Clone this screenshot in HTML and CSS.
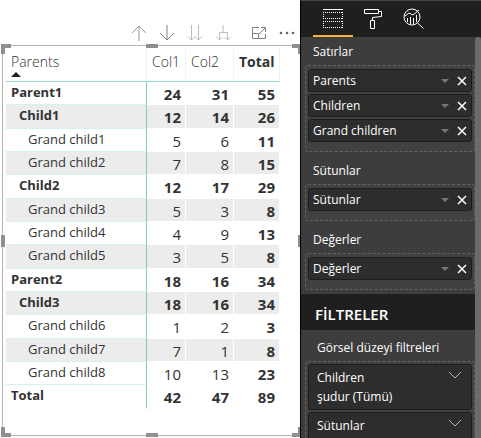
FILE: index.html
```html
<!DOCTYPE html>
<html lang="tr">
<head>
<meta charset="utf-8">
<meta name="viewport" content="width=device-width, initial-scale=1">
<title>Matrix</title>
<link rel="stylesheet" href="styles.css">
</head>
<body>
<main class="canvas">
  <div class="toolbar">
    <button class="tool" aria-label="Drill up"><svg viewBox="0 0 28 20"><path d="M14 18V3M7 10l7-7 7 7"/></svg></button>
    <button class="tool tool-dark" aria-label="Drill down"><svg viewBox="0 0 28 20"><path d="M14 2v15M7 10l7 7 7-7"/></svg></button>
    <button class="tool tool-faint" aria-label="Next level"><svg viewBox="0 0 28 20"><path d="M10.500 2v15M7 13.500l3.500 3.500 3.500-3.500M17.500 2v15M14 13.500l3.500 3.500 3.500-3.500"/></svg></button>
    <button class="tool tool-faint" aria-label="Expand level"><svg viewBox="0 0 28 20"><path d="M14 2v7M10.500 17V9.500h8V17M7.500 14l3 3 3-3M15.500 14l3 3 3-3"/></svg></button>
    <button class="tool tool-dark tool-focus" aria-label="Focus mode"><svg viewBox="0 0 28 20"><path d="M14 4.500H7.500v11h13V11M16 4.500h4.500V9M20 5l-6 6M7.500 10.500h6v5"/></svg></button>
    <button class="tool tool-dots" aria-label="More options"><svg viewBox="0 0 28 20"><circle cx="8" cy="10" r="1.300"/><circle cx="14" cy="10" r="1.300"/><circle cx="20" cy="10" r="1.300"/></svg></button>
  </div>
  <section class="visual">
    <table class="matrix">
      <thead>
        <tr><th scope="col">Parents<span class="sort"></span></th><th scope="col">Col1</th><th scope="col">Col2</th><th scope="col" class="sum">Total</th></tr>
      </thead>
      <tbody>
        <tr class="strong"><th scope="row">Parent1</th><td>24</td><td>31</td><td>55</td></tr>
        <tr class="strong child"><th scope="row">Child1</th><td>12</td><td>14</td><td>26</td></tr>
        <tr class="grand"><th scope="row">Grand child1</th><td>5</td><td>6</td><td>11</td></tr>
        <tr class="grand"><th scope="row">Grand child2</th><td>7</td><td>8</td><td>15</td></tr>
        <tr class="strong child"><th scope="row">Child2</th><td>12</td><td>17</td><td>29</td></tr>
        <tr class="grand"><th scope="row">Grand child3</th><td>5</td><td>3</td><td>8</td></tr>
        <tr class="grand"><th scope="row">Grand child4</th><td>4</td><td>9</td><td>13</td></tr>
        <tr class="grand"><th scope="row">Grand child5</th><td>3</td><td>5</td><td>8</td></tr>
        <tr class="strong"><th scope="row">Parent2</th><td>18</td><td>16</td><td>34</td></tr>
        <tr class="strong child"><th scope="row">Child3</th><td>18</td><td>16</td><td>34</td></tr>
        <tr class="grand"><th scope="row">Grand child6</th><td>1</td><td>2</td><td>3</td></tr>
        <tr class="grand"><th scope="row">Grand child7</th><td>7</td><td>1</td><td>8</td></tr>
        <tr class="grand"><th scope="row">Grand child8</th><td>10</td><td>13</td><td>23</td></tr>
        <tr class="strong total"><th scope="row">Total</th><td>42</td><td>47</td><td>89</td></tr>
      </tbody>
    </table>
    <span class="corner top left"></span><span class="corner top right"></span>
    <span class="corner bottom left"></span><span class="corner bottom right"></span>
    <span class="grip grip-top"></span><span class="grip grip-bottom"></span>
    <span class="grip grip-left"></span><span class="grip grip-right"></span>
  </section>
</main>
<aside class="pane">
  <nav class="tabs">
    <button class="tab active" aria-label="Fields"><svg viewBox="0 0 30 28"><path d="M5 5.500h20"/><path stroke-dasharray="1 1" d="M5 8.500h20M5 14.500h20M5 17.500h20M5 23.500h20M5.500 8v7M24.500 8v7M5.500 17v7M24.500 17v7"/></svg></button>
    <button class="tab" aria-label="Format"><svg viewBox="0 0 30 28"><path d="M6.500 5.500h14v4h-14zM20.500 7.500h3v5l-9 1v3M12.500 16.500h4v8h-4z"/></svg></button>
    <button class="tab" aria-label="Analytics"><svg viewBox="0 0 30 28"><circle cx="14" cy="13" r="8"/><path d="M19.500 19l6 5.500M7 12l4-3 4 2 6-5M9.500 14v4M12.500 13v7M15.500 14v6M18.500 11v7"/></svg></button>
  </nav>
  <div class="scroll">
    <div class="wells">
      <section class="group">
        <h3>Satırlar</h3>
        <div class="well">
          <div class="field"><span>Parents</span><button class="menu" aria-label="Parents menu"></button><button class="remove" aria-label="Remove Parents"><svg viewBox="0 0 10 10"><path d="M1 1l8 8M9 1L1 9"/></svg></button></div>
          <div class="field"><span>Children</span><button class="menu" aria-label="Children menu"></button><button class="remove" aria-label="Remove Children"><svg viewBox="0 0 10 10"><path d="M1 1l8 8M9 1L1 9"/></svg></button></div>
          <div class="field"><span>Grand children</span><button class="menu" aria-label="Grand children menu"></button><button class="remove" aria-label="Remove Grand children"><svg viewBox="0 0 10 10"><path d="M1 1l8 8M9 1L1 9"/></svg></button></div>
        </div>
      </section>
      <section class="group">
        <h3>Sütunlar</h3>
        <div class="well">
          <div class="field"><span>Sütunlar</span><button class="menu" aria-label="Sütunlar menu"></button><button class="remove" aria-label="Remove Sütunlar"><svg viewBox="0 0 10 10"><path d="M1 1l8 8M9 1L1 9"/></svg></button></div>
        </div>
      </section>
      <section class="group">
        <h3>Değerler</h3>
        <div class="well">
          <div class="field"><span>Değerler</span><button class="menu" aria-label="Değerler menu"></button><button class="remove" aria-label="Remove Değerler"><svg viewBox="0 0 10 10"><path d="M1 1l8 8M9 1L1 9"/></svg></button></div>
        </div>
      </section>
      <h2>FİLTRELER</h2>
      <section class="filters">
        <h3>Görsel düzeyi filtreleri</h3>
        <div class="well">
          <div class="filter"><div>Children<br>şudur (Tümü)</div><button class="expand" aria-label="Expand Children"><svg viewBox="0 0 14 8"><path d="M1 1l6 6 6-6"/></svg></button></div>
          <div class="filter"><div>Sütunlar</div><button class="expand" aria-label="Expand Sütunlar"><svg viewBox="0 0 14 8"><path d="M1 1l6 6 6-6"/></svg></button></div>
        </div>
      </section>
    </div>
    <div class="track"></div>
  </div>
</aside>
</body>
</html>
```
FILE: styles.css
```css
* { box-sizing: border-box; }
body {
  display: flex;
  height: 100vh;
  margin: 0;
  overflow: hidden;
  background: #fff;
  color: #333;
  font: 13px/18px "Open Sans", "Noto Sans", sans-serif;
}
button { padding: 0; border: 0; background: none; color: inherit; font: inherit; }
svg { display: block; fill: none; stroke: currentColor; }
h2, h3 { margin: 0; font-weight: 400; }

.canvas { display: flex; flex: 1; flex-direction: column; min-width: 0; overflow: hidden; }
.toolbar { display: flex; justify-content: flex-end; height: 45px; margin-right: -1px; padding-top: 23px; }
.tool { width: 28px; height: 20px; color: #999; }
.tool-dark { color: #808080; }
.tool-faint { color: #bdbdbd; }
.tool-focus { margin-left: 8px; }
.tool-dots { color: #666; }
.tool-dots svg { fill: currentColor; stroke: none; }

.visual {
  position: relative;
  display: flex;
  flex: 1;
  margin: 0 -1px 2px 2px;
  padding: 3px 20px 26px 3px;
  border: 1px solid #b3b3b3;
}
.corner { position: absolute; width: 10px; height: 10px; border: 0 solid #8f8f8f; }
.top { top: -2px; border-top-width: 4px; }
.bottom { bottom: -2px; border-bottom-width: 4px; }
.left { left: -2px; border-left-width: 4px; }
.right { right: -2px; border-right-width: 4px; }
.grip { position: absolute; background: #8f8f8f; }
.grip-top, .grip-bottom { left: calc(50% - 6px); width: 12px; height: 4px; }
.grip-left, .grip-right { top: calc(50% - 6px); width: 4px; height: 12px; }
.grip-top { top: -2px; }
.grip-bottom { bottom: -2px; }
.grip-left { left: -2px; }
.grip-right { right: -2px; }

.matrix { width: 100%; height: 100%; border-collapse: separate; border-spacing: 0; table-layout: fixed; }
.matrix th, .matrix td { padding: 0 4px; vertical-align: top; }
.matrix thead th {
  height: 33px;
  padding: 3px 4px 0 5px;
  border-right: 1px solid #e3f6f3;
  border-bottom: 1px solid #8edbd1;
  font-size: 14px;
  line-height: 20px;
  font-weight: 300;
  text-align: left;
}
.matrix thead th:nth-child(2) { width: 39px; }
.matrix thead th:nth-child(3) { width: 48px; }
.matrix thead .sum { width: 46px; font-weight: 700; }
.sort { display: block; width: 0; border: 5px solid transparent; border-top: 0; border-bottom-color: #222; }
.matrix tbody th {
  padding-left: 5px;
  border-right: 1px solid #74cfc4;
  border-bottom: 1px solid #d6f1ed;
  font-weight: 400;
  line-height: 20px;
  text-align: left;
}
.matrix td { padding-top: 2px; border-right: 1px solid #fff; border-bottom: 1px solid #fff; font-size: 15px; line-height: 20px; text-align: right; }
.matrix tbody tr:nth-child(even):not(.total) { background: #ececec; }
.matrix .strong th, .matrix .strong td, .matrix td:last-child { font-weight: 700; }
.matrix .child th { padding-left: 13px; }
.matrix .grand th { padding-left: 22px; }
.matrix .total th { border-bottom-color: #fff; }

.pane {
  position: relative;
  display: flex;
  flex: 0 0 181px;
  flex-direction: column;
  border-top: 1px solid #444;
  border-left: 1px solid #000;
  background: #3d3d3d;
  color: #fff;
  font-size: 12px;
}
.tabs { display: flex; flex: 0 0 36px; padding-left: 12px; background: #1f1f1f; }
.tab { display: flex; justify-content: center; width: 40px; height: 36px; padding: 3px 5px 0; }
.tab.active { width: 40px; border-bottom: 2px solid #f2b632; }
.tab svg { flex: none; width: 30px; height: 28px; }
.scroll { display: flex; flex: 1; min-height: 0; }
.wells { flex: 1; overflow: hidden; }
.track { width: 6px; border-radius: 3px 3px 0 0; background: #6b6b6b; }
.group { margin-bottom: 4px; }
h3 { font-size: 12px; }
.group h3 { padding: 6px 12px 4px; }
.well { margin: 0 0 0 4px; padding: 3px 2px 9px; border: 1px dashed #636363; border-radius: 3px; background: #414141; }
.field { display: flex; align-items: center; height: 23px; padding: 0 4px; border: 1px solid #1d1d1d; border-radius: 3px; background: #2d2d2d; }
.field + .field { margin-top: 2px; }
.field span { flex: 1; }
.menu { width: 8px; height: 4px; border: 4px solid transparent; border-top-color: #777; border-bottom: 0; }
.remove { width: 10px; height: 10px; margin-left: 8px; }
.remove svg { stroke-width: 1.5; }
h2 { padding: 11px 14px 7px; background: #1f1f1f; font-size: 15px; line-height: 18px; font-weight: 600; }
.filters h3 { padding: 9px 16px 4px; }
.filters .well { padding-top: 2px; }
.filter { display: flex; justify-content: space-between; padding: 3px 9px 3px 8px; border: 1px solid #1d1d1d; border-radius: 3px; background: #2d2d2d; line-height: 19px; }
.filter + .filter { margin-top: 2px; padding-bottom: 22px; }
.expand { width: 14px; height: 8px; margin-top: 3px; color: #b5b5b5; }
```
